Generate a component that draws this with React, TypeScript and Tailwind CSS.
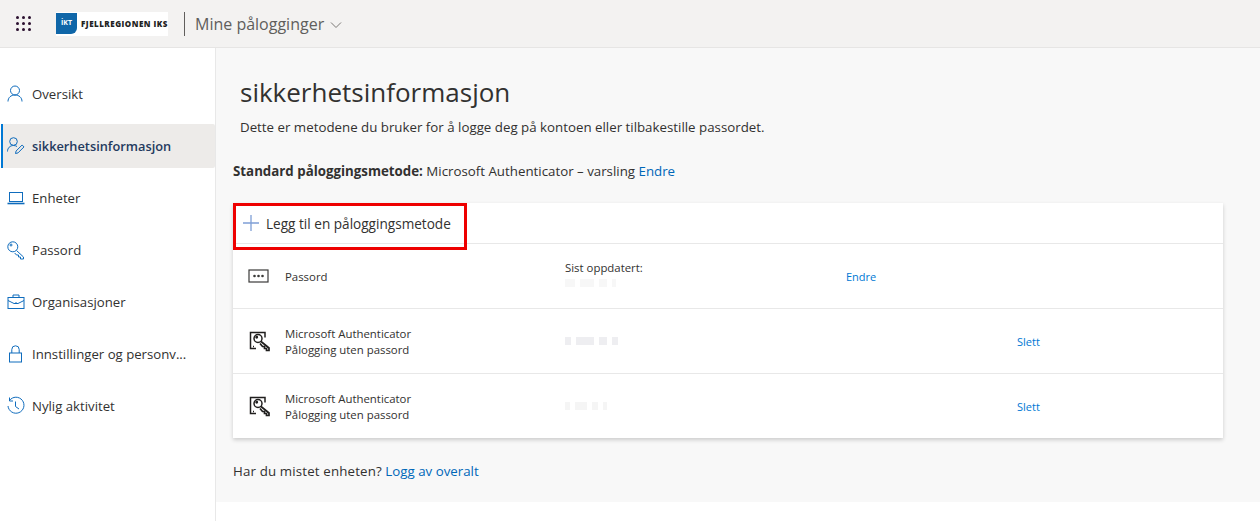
import type { ReactNode } from "react";

const font = { fontFamily: '"Open Sans", "Noto Sans", sans-serif' };

function Icon({ children, size = 20 }: { children: ReactNode; size?: number }) {
  return (
    <svg width={size} height={size} viewBox="0 0 20 20" fill="none" stroke="currentColor" strokeWidth="1" className="shrink-0">
      {children}
    </svg>
  );
}

const navItems: { label: string; active?: boolean; icon: ReactNode }[] = [
  {
    label: "Oversikt",
    icon: (
      <>
        <circle cx="9" cy="6.500" r="4.500" />
        <path d="M2 17.500c0-4 3-6.500 7-6.500s7 2.500 7 6.500" />
      </>
    ),
  },
  {
    label: "sikkerhetsinformasjon",
    active: true,
    icon: (
      <>
        <circle cx="7.500" cy="5.500" r="3.800" />
        <path d="M1.500 15.500c0-3.500 2.500-6 6-6 1.300 0 2.500.3 3.500 1" />
        <path d="M9.500 17.500l.6-2.500 6-6 1.900 1.900-6 6z" />
      </>
    ),
  },
  {
    label: "Enheter",
    icon: (
      <>
        <rect x="3.500" y="4.500" width="13" height="9" />
        <path d="M1.500 15.500h17" strokeWidth="1.600" />
      </>
    ),
  },
  {
    label: "Passord",
    icon: (
      <>
        <circle cx="6.800" cy="6.800" r="5" />
        <circle cx="5" cy="5" r="1" />
        <path d="M10.500 10.500l7 6.500v2h-3v-2h-2v-2h-2l-1.800-2" />
      </>
    ),
  },
  {
    label: "Organisasjoner",
    icon: (
      <>
        <rect x="2" y="5.500" width="16" height="11" />
        <path d="M7 5.500v-2.500h6v2.500M2 8.500l6 3h4l6-3M9 11h2" />
      </>
    ),
  },
  {
    label: "Innstillinger og personv...",
    icon: (
      <>
        <rect x="3.500" y="9" width="12" height="9" />
        <path d="M5.800 9v-3.500a3.700 3.700 0 0 1 7.400 0v3.500" />
      </>
    ),
  },
  {
    label: "Nylig aktivitet",
    icon: (
      <>
        <path d="M3.500 4.500a8 8 0 1 1-1.500 5.500" />
        <path d="M3.500 1.500v3.500h3.500M9.500 5.500v5l3.500 2.500" />
      </>
    ),
  },
];

function KeyDevice() {
  return (
    <svg width="24" height="24" viewBox="0 0 24 24" fill="none" stroke="#201f1e" strokeWidth="1.500" className="shrink-0">
      <path d="M8 19.500H2.500V3.500h14.500v5" />
      <circle cx="10" cy="9.500" r="4" />
      <circle cx="8.700" cy="8.200" r="0.700" fill="#201f1e" />
      <path d="M13 12.500l8 6.500v2.500h-2.500v-2h-2v-2h-2l-2.500-3" strokeWidth="1.700" />
      <path d="M5 17.500h1" />
    </svg>
  );
}

// blurred out values in the source screenshot, just faint smudges
function Redacted({ parts, tone }: { parts: number[]; tone: string }) {
  return (
    <div className="flex h-[8px] gap-[5px] blur-[0.6px]">
      {parts.map((w, i) => (
        <span key={i} className={tone} style={{ width: w }} />
      ))}
    </div>
  );
}

function MethodRow({ title, sub, link, parts, tone }: { title: string; sub: string; link: string; parts: number[]; tone: string }) {
  return (
    <div className="grid h-[65px] grid-cols-[37px_280px_452px_1fr] items-center border-t border-[#e8e8e8] pl-[15px] text-[11.4px] leading-[16px] text-[#323130]">
      <KeyDevice />
      <div className="pt-[2px]">
        <div>{title}</div>
        <div>{sub}</div>
      </div>
      <Redacted parts={parts} tone={tone} />
      <a className="pt-[2px] text-[11px] text-[#0078d4]">{link}</a>
    </div>
  );
}

export default function App() {
  return (
    <div style={font} className="flex min-h-[521px] flex-col bg-white text-[#323130]">
      <header className="flex h-[48px] items-center border-b border-[#e6e5e4] bg-[#f3f2f1]">
        <div className="ml-[16px] grid h-[15px] w-[15px] grid-cols-3 gap-x-[3px] gap-y-[3px]">
          {Array.from({ length: 9 }).map((_, i) => (
            <span key={i} className="h-[3px] w-[3px] rounded-full bg-[#2b1030]" />
          ))}
        </div>
        <div className="ml-[25px] flex h-[24px] w-[112px] items-center bg-white">
          <div className="flex h-[21px] w-[21px] items-center justify-center rounded-br-[6px] bg-[#0f66a8] text-[7px] font-bold text-white">
            İKT
          </div>
          <span className="ml-[4px] whitespace-nowrap text-[8px] font-extrabold tracking-[0.5px] text-[#222]">FJELLREGIONEN IKS</span>
        </div>
        <div className="ml-[16px] h-[24px] w-px bg-[#605e5c]" />
        <span className="ml-[10px] text-[16px] font-medium text-[#605e5c]">Mine pålogginger</span>
        <svg width="12" height="12" viewBox="0 0 12 12" fill="none" stroke="#7a7875" strokeWidth="1" className="ml-[6px] mt-[2px]">
          <path d="M1 3.500l5 5 5-5" />
        </svg>
      </header>

      <div className="flex flex-1">
        <nav className="w-[216px] shrink-0 border-r border-[#e8e8e8] pl-px pt-[24px]">
          <div className="flex flex-col gap-[8px]">
            {navItems.map((item) => (
              <div
                key={item.label}
                className={
                  item.active
                    ? "flex h-[44px] items-center gap-[6px] rounded-r-[2px] border-l-2 border-[#0078d4] bg-[#edebe9] pl-[3px] text-[12.8px] font-semibold text-[#243a5e]"
                    : "flex h-[44px] items-center gap-[6px] pl-[5px] text-[13.2px] text-[#323130]"
                }
              >
                <span className="text-[#0f6cbd]">
                  <Icon size={20}>{item.icon}</Icon>
                </span>
                <span className="whitespace-nowrap pt-[2px]">{item.label}</span>
              </div>
            ))}
          </div>
        </nav>

        <main className="flex h-[454px] flex-1 flex-col bg-[#f8f8f8] pl-[17px] pr-[37px]">
          <h1 className="ml-[7px] mt-[26px] text-[26px] leading-[36px] text-[#323130]">sikkerhetsinformasjon</h1>
          <p className="ml-[7px] mt-[7px] text-[13.3px] leading-[20px]">
            Dette er metodene du bruker for å logge deg på kontoen eller tilbakestille passordet.
          </p>
          <p className="mt-[24px] text-[13.3px] leading-[20px]">
            <b className="font-bold">Standard påloggingsmetode:</b> Microsoft Authenticator – varsling{" "}
            <a className="text-[#0067b8]">Endre</a>
          </p>
          <section className="mt-[22px] bg-white shadow-[0_1.500px_4px_rgba(0,0,0,0.18)]">
            <div className="relative flex h-[40px] items-center pl-[9px] text-[13.6px]">
              <svg width="18" height="18" viewBox="0 0 18 18" stroke="#7f9fd6" strokeWidth="1.300">
                <path d="M9 1v16M1 9h16" />
              </svg>
              <span className="ml-[6px] pt-[2px]">Legg til en påloggingsmetode</span>
              <div className="absolute left-0 top-0 h-[47px] w-[234px] border-[3px] border-[#ee0000]" />
            </div>
            <div className="grid h-[65px] grid-cols-[37px_280px_281px_1fr] items-center border-t border-[#e8e8e8] pl-[15px] text-[11.4px] leading-[16px]">
              <svg width="22" height="14" viewBox="0 0 22 14" fill="none" stroke="#3b3a39" strokeWidth="1.200">
                <rect x="1" y="1" width="19" height="12" />
                <circle cx="6.500" cy="7" r="1.300" fill="#3b3a39" stroke="none" />
                <circle cx="10.500" cy="7" r="1.300" fill="#3b3a39" stroke="none" />
                <circle cx="14.500" cy="7" r="1.300" fill="#3b3a39" stroke="none" />
              </svg>
              <div className="pt-[2px]">Passord</div>
              <div>
                <div className="-mt-[5px]">Sist oppdatert:</div>
                <div className="mt-[3px]">
                  <Redacted parts={[10, 14, 8, 4]} tone="bg-[#f7f7f7]" />
                </div>
              </div>
              <a className="pt-[2px] text-[11px] text-[#0078d4]">Endre</a>
            </div>
            <MethodRow title="Microsoft Authenticator" sub="Pålogging uten passord" link="Slett" parts={[6, 18, 8, 6]} tone="bg-[#eeeef1]" />
            <MethodRow title="Microsoft Authenticator" sub="Pålogging uten passord" link="Slett" parts={[5, 12, 6, 4]} tone="bg-[#f5f5f5]" />
          </section>
          <p className="mt-[23px] text-[13.3px] leading-[20px]">
            <span className="font-medium tracking-[0.15px]">Har du mistet enheten?</span> <a className="text-[#0067b8]">Logg av overalt</a>
          </p>
        </main>
      </div>
    </div>
  );
}
